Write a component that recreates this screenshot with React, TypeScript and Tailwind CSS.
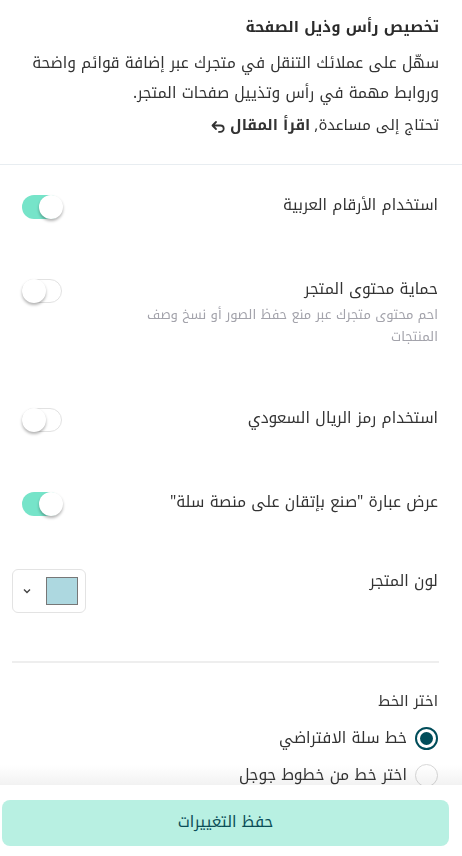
import React from 'react';

const font = { fontFamily: '"Noto Kufi Arabic", "DejaVu Sans", sans-serif' };

function Toggle({ on }: { on: boolean }) {
  return (
    <div
      className={`relative w-[40px] h-[24px] rounded-full shrink-0 ${on ? 'bg-[#76e4c9]' : 'bg-white border border-[#e2e2e2]'}`}
    >
      <div
        className={`absolute top-0 w-[24px] h-[24px] rounded-full bg-white shadow-[0_2px_3px_rgba(0,0,0,0.3)] ${on ? 'right-[-1px]' : 'left-[-1px] top-[-1px]'}`}
      />
    </div>
  );
}

function ToggleRow({ label, desc, on }: { label: string; desc?: string; on: boolean }) {
  return (
    <div className="flex items-start justify-between pt-[28px] pb-[30px] pr-[24px] pl-[22px]">
      <div className="flex flex-col">
        <div className="text-[15.5px] leading-[24px] text-[#333]">{label}</div>
        {desc && (
          <div className="mt-[3px] max-w-[300px] text-[13px] leading-[22px] text-[#a3a3ab]">{desc}</div>
        )}
      </div>
      <div className="mt-[2px]">
        <Toggle on={on} />
      </div>
    </div>
  );
}

export default function App() {
  return (
    <div dir="rtl" style={font} className="h-[856px] flex flex-col bg-white text-[#333] overflow-hidden">
      <div className="relative flex-1 min-h-0">
        <div className="pt-[14px] pr-[23px] pl-[20px] pb-[24px] border-b border-[#e8edf1]">
          <div className="text-[15px] font-bold leading-[26px] text-[#2b2b2b]">تخصيص رأس وذيل الصفحة</div>
          <div className="mt-[8px] text-[15.5px] leading-[30px] text-[#333]">
            سهّل على عملائك التنقل في متجرك عبر إضافة قوائم واضحة وروابط مهمة في رأس وتذييل صفحات المتجر.
          </div>
          <div className="mt-[2px] text-[15px] leading-[30px] text-[#333] flex items-center gap-[4px]">
            <span>تحتاج إلى مساعدة,</span>
            <span className="font-bold">اقرأ المقال</span>
            <svg width="15" height="13" viewBox="0 0 15 13" className="mt-[2px]">
              <path
                d="M5 2 L1.5 5.5 L5 9 M2 5.5 H9.5 a3.2 3.2 0 0 1 0 6.4 H8"
                fill="none"
                stroke="#333"
                strokeWidth="1.8"
                strokeLinecap="round"
                strokeLinejoin="round"
              />
            </svg>
          </div>
        </div>

        <ToggleRow label="استخدام الأرقام العربية" on />
        <ToggleRow
          label="حماية محتوى المتجر"
          desc="احم محتوى متجرك عبر منع حفظ الصور أو نسخ وصف المنتجات"
          on={false}
        />
        <ToggleRow label="استخدام رمز الريال السعودي" on={false} />
        <ToggleRow label='عرض عبارة "صنع بإتقان على منصة سلة"' on />

        <div className="flex items-start justify-between pt-[23px] pr-[24px] pl-[12px]">
          <div className="text-[15.5px] leading-[24px] text-[#333]">لون المتجر</div>
          <div className="w-[74px] h-[44px] rounded-[6px] border border-[#e3e3e3] flex items-center justify-between pr-[7px] pl-[10px]">
            <div className="w-[32px] h-[28px] bg-[#add8e0] border border-[#777]" />
            <svg width="8" height="6" viewBox="0 0 8 6">
              <path d="M1 1.5 L4 4.5 L7 1.5" fill="none" stroke="#444" strokeWidth="1.4" />
            </svg>
          </div>
        </div>

        <div className="mt-[48px] mr-[23px] ml-[12px] border-t-2 border-[#eeeeee]" />

        <div className="pr-[24px] pt-[26px]">
          <div className="text-[15px] leading-[24px] text-[#333]">اختر الخط</div>
          <div className="mt-[13px] flex items-center gap-[8px]">
            <div className="w-[23px] h-[23px] rounded-full border-2 border-[#004d5a] flex items-center justify-center">
              <div className="w-[13px] h-[13px] rounded-full bg-[#004d5a]" />
            </div>
            <div className="text-[15.5px] leading-[24px]">خط سلة الافتراضي</div>
          </div>
          <div className="mt-[13px] flex items-center gap-[8px]">
            <div className="w-[23px] h-[23px] rounded-full border border-[#d8d8d8]" />
            <div className="text-[15.5px] leading-[24px]">اختر خط من خطوط جوجل</div>
          </div>
        </div>

        <div className="pointer-events-none absolute bottom-0 left-0 right-0 h-[20px] mix-blend-multiply bg-gradient-to-b from-white to-[#f2f2f2]" />
      </div>

      <div className="relative z-10 h-[71px] shrink-0 pt-[15px] pl-[2px] pr-[13px] bg-white">
        <button className="w-full h-[46px] rounded-[8px] bg-[#b8f0e2] text-[#0a4d57] text-[15.5px]" style={font}>
          حفظ التغييرات
        </button>
      </div>
    </div>
  );
}
